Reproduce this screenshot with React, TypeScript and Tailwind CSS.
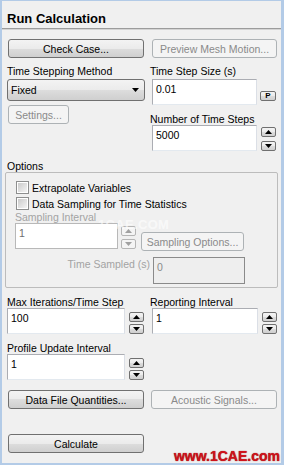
import type { ReactNode } from 'react';

const btnFace = 'bg-[linear-gradient(#f3f3f3,#ebebeb_50%,#dddddd_50%,#cfcfcf)]';

function WinButton({ children, width, disabled, className = '' }: { children: ReactNode; width: string; disabled?: boolean; className?: string }) {
  return (
    <div
      className={`relative z-10 ${width} h-[19px] shrink-0 rounded-[3px] border flex items-center justify-center ${
        disabled ? 'border-[#adb2b5] bg-[#f4f4f4] text-[#8a8a8a]' : `border-[#707070] ${btnFace} text-black`
      } ${className}`}
    >
      {children}
    </div>
  );
}

function TextBox({ value, width, height = 'h-[26px]', disabled, readOnly }: { value: string; width: string; height?: string; disabled?: boolean; readOnly?: boolean }) {
  return (
    <div
      className={`${width} ${height} shrink-0 border pl-[3px] pt-[3px] ${
        readOnly
          ? 'border-[#8a8a8a] bg-[#eeeeee] text-[#8a8a8a]'
          : disabled
          ? 'border-[#b8b8b8] bg-white text-[#6d6d6d]'
          : 'border-[#abadb3] border-r-[#dbdfe6] border-b-[#e3e9ef] bg-white text-black'
      }`}
    >
      {value}
    </div>
  );
}

function Arrow({ up, disabled }: { up?: boolean; disabled?: boolean }) {
  return (
    <svg width="7" height="4" viewBox="0 0 7 4">
      <path d={up ? 'M0 4 L3.5 0 L7 4 Z' : 'M0 0 L7 0 L3.5 4 Z'} fill={disabled ? '#a0a0a0' : '#000'} />
    </svg>
  );
}

function SpinBtn({ up, disabled }: { up?: boolean; disabled?: boolean }) {
  return (
    <div
      className={`w-[15px] h-[10px] rounded-[2px] border flex items-center justify-center ${
        disabled ? 'border-[#b5b5b5] bg-[#f4f4f4]' : `border-[#707070] ${btnFace}`
      }`}
    >
      <Arrow up={up} disabled={disabled} />
    </div>
  );
}

function Spin({ top, gap, disabled }: { top: string; gap: string; disabled?: boolean }) {
  return (
    <div className={`flex flex-col ${top} ${gap} shrink-0`}>
      <SpinBtn up disabled={disabled} />
      <SpinBtn disabled={disabled} />
    </div>
  );
}

function CheckBox({ label }: { label: string }) {
  return (
    <div className="flex items-center h-[13px]">
      <div className="w-[13px] h-[13px] border border-[#8e8f8f] bg-white p-px">
        <div className="w-full h-full bg-[linear-gradient(135deg,#cbcbcb,#f4f4f4)]" />
      </div>
      <span className="ml-[3px]">{label}</span>
    </div>
  );
}

export default function App() {
  return (
    <div className="relative w-[284px] h-[465px] overflow-hidden bg-[#f0f0f0] border-l-2 border-t border-r-[3px] border-b-2 border-[#b3cbe7] font-['Liberation_Sans',Arial,sans-serif] text-[10.5px] leading-[12px] text-black">
      {/* Title */}
      <div className="pl-[5px] pt-[10px] text-[13px] leading-[16px] font-bold">Run Calculation</div>
      <div className="mt-px h-[2px] border-t border-[#9c9c9c] border-b border-b-[#d4d4d4]" />

      <div className="pl-[5px]">
        {/* Top buttons */}
        <div className="flex mt-[9px]">
          <WinButton width="w-[136px]" className="ml-px">Check Case...</WinButton>
          <WinButton width="w-[125px]" className="ml-[8px]" disabled>Preview Mesh Motion...</WinButton>
        </div>

        {/* Time stepping */}
        <div className="flex">
          <div className="w-[143px] shrink-0">
            <div className="mt-[7px]">Time Stepping Method</div>
            <div className={`mt-[2px] w-[138px] h-[22px] rounded-[3px] border border-[#707070] ${btnFace} flex items-center justify-between pl-[3px] pr-[5px]`}>
              <span>Fixed</span>
              <Arrow />
            </div>
            <WinButton width="w-[61px]" className="ml-px mt-[4px]" disabled>Settings...</WinButton>
          </div>
          <div className="shrink-0">
            <div className="mt-[7px]">Time Step Size (s)</div>
            <div className="flex mt-[2px]">
              <div className="ml-[2px]"><TextBox value="0.01" width="w-[105px]" /></div>
              <div className={`ml-[3px] mt-[12px] w-[16px] h-[10px] rounded-[2px] border border-[#707070] ${btnFace} flex items-center justify-center text-[8px] leading-[8px] font-bold`}>P</div>
            </div>
            <div className="mt-[8px]">Number of Time Steps</div>
            <div className="flex">
              <div className="ml-[2px]"><TextBox value="5000" width="w-[105px]" /></div>
              <div className="ml-[4px]"><Spin top="mt-[2px]" gap="gap-[4px]" /></div>
            </div>
          </div>
        </div>

        {/* Options */}
        <div className="mt-[9px]">Options</div>
        <div className="relative ml-[-2px] w-[273px] h-[116px] border border-[#bcbcbc] rounded-[2px] pl-[9px] pt-[8px]">
          <div className="absolute left-[92px] top-[45px] text-[13px] leading-[13px] font-bold text-white/60 tracking-wide">1CAE.COM</div>
          <div className="ml-px"><CheckBox label="Extrapolate Variables" /></div>
          <div className="ml-px mt-[3px]"><CheckBox label="Data Sampling for Time Statistics" /></div>
          <div className="mt-px text-[#a3a3a3]">Sampling Interval</div>
          <div className="flex">
            <TextBox value="1" width="w-[103px]" disabled />
            <div className="ml-[3px]"><Spin top="mt-[3px]" gap="gap-[3px]" disabled /></div>
            <WinButton width="w-[103px]" className="ml-[5px] mt-[9px]" disabled>Sampling Options...</WinButton>
          </div>
          <div className="flex mt-[6px]">
            <div className="w-[135px] text-right pt-[1px] text-[#a3a3a3]">Time Sampled (s)</div>
            <div className="ml-[3px]"><TextBox value="0" width="w-[92px]" height="h-[27px]" readOnly /></div>
          </div>
        </div>

        {/* Iterations */}
        <div className="flex mt-[8px]">
          <div className="w-[143px] shrink-0">
            <div>Max Iterations/Time Step</div>
            <div className="flex">
              <TextBox value="100" width="w-[118px]" />
              <div className="ml-[4px]"><Spin top="mt-[4px]" gap="gap-[2px]" /></div>
            </div>
          </div>
          <div className="shrink-0">
            <div>Reporting Interval</div>
            <div className="flex">
              <div className="ml-[2px]"><TextBox value="1" width="w-[106px]" /></div>
              <div className="ml-[4px]"><Spin top="mt-[4px]" gap="gap-[2px]" /></div>
            </div>
          </div>
        </div>

        <div className="mt-[8px]">Profile Update Interval</div>
        <div className="flex">
          <TextBox value="1" width="w-[118px]" />
          <div className="ml-[4px]"><Spin top="mt-[4px]" gap="gap-[2px]" /></div>
        </div>

        <div className="flex mt-[10px]">
          <WinButton width="w-[136px]" className="ml-px">Data File Quantities...</WinButton>
          <WinButton width="w-[126px]" className="ml-[7px]" disabled>Acoustic Signals...</WinButton>
        </div>

        <WinButton width="w-[136px]" className="ml-px mt-[25px]">Calculate</WinButton>
      </div>

      {/* watermark */}
      <div className="absolute right-[1px] bottom-[0px] text-[14px] leading-[14px] font-bold text-[#d0121b] [text-shadow:0_0_1px_#7a0000]">www.1CAE.com</div>
    </div>
  );
}
